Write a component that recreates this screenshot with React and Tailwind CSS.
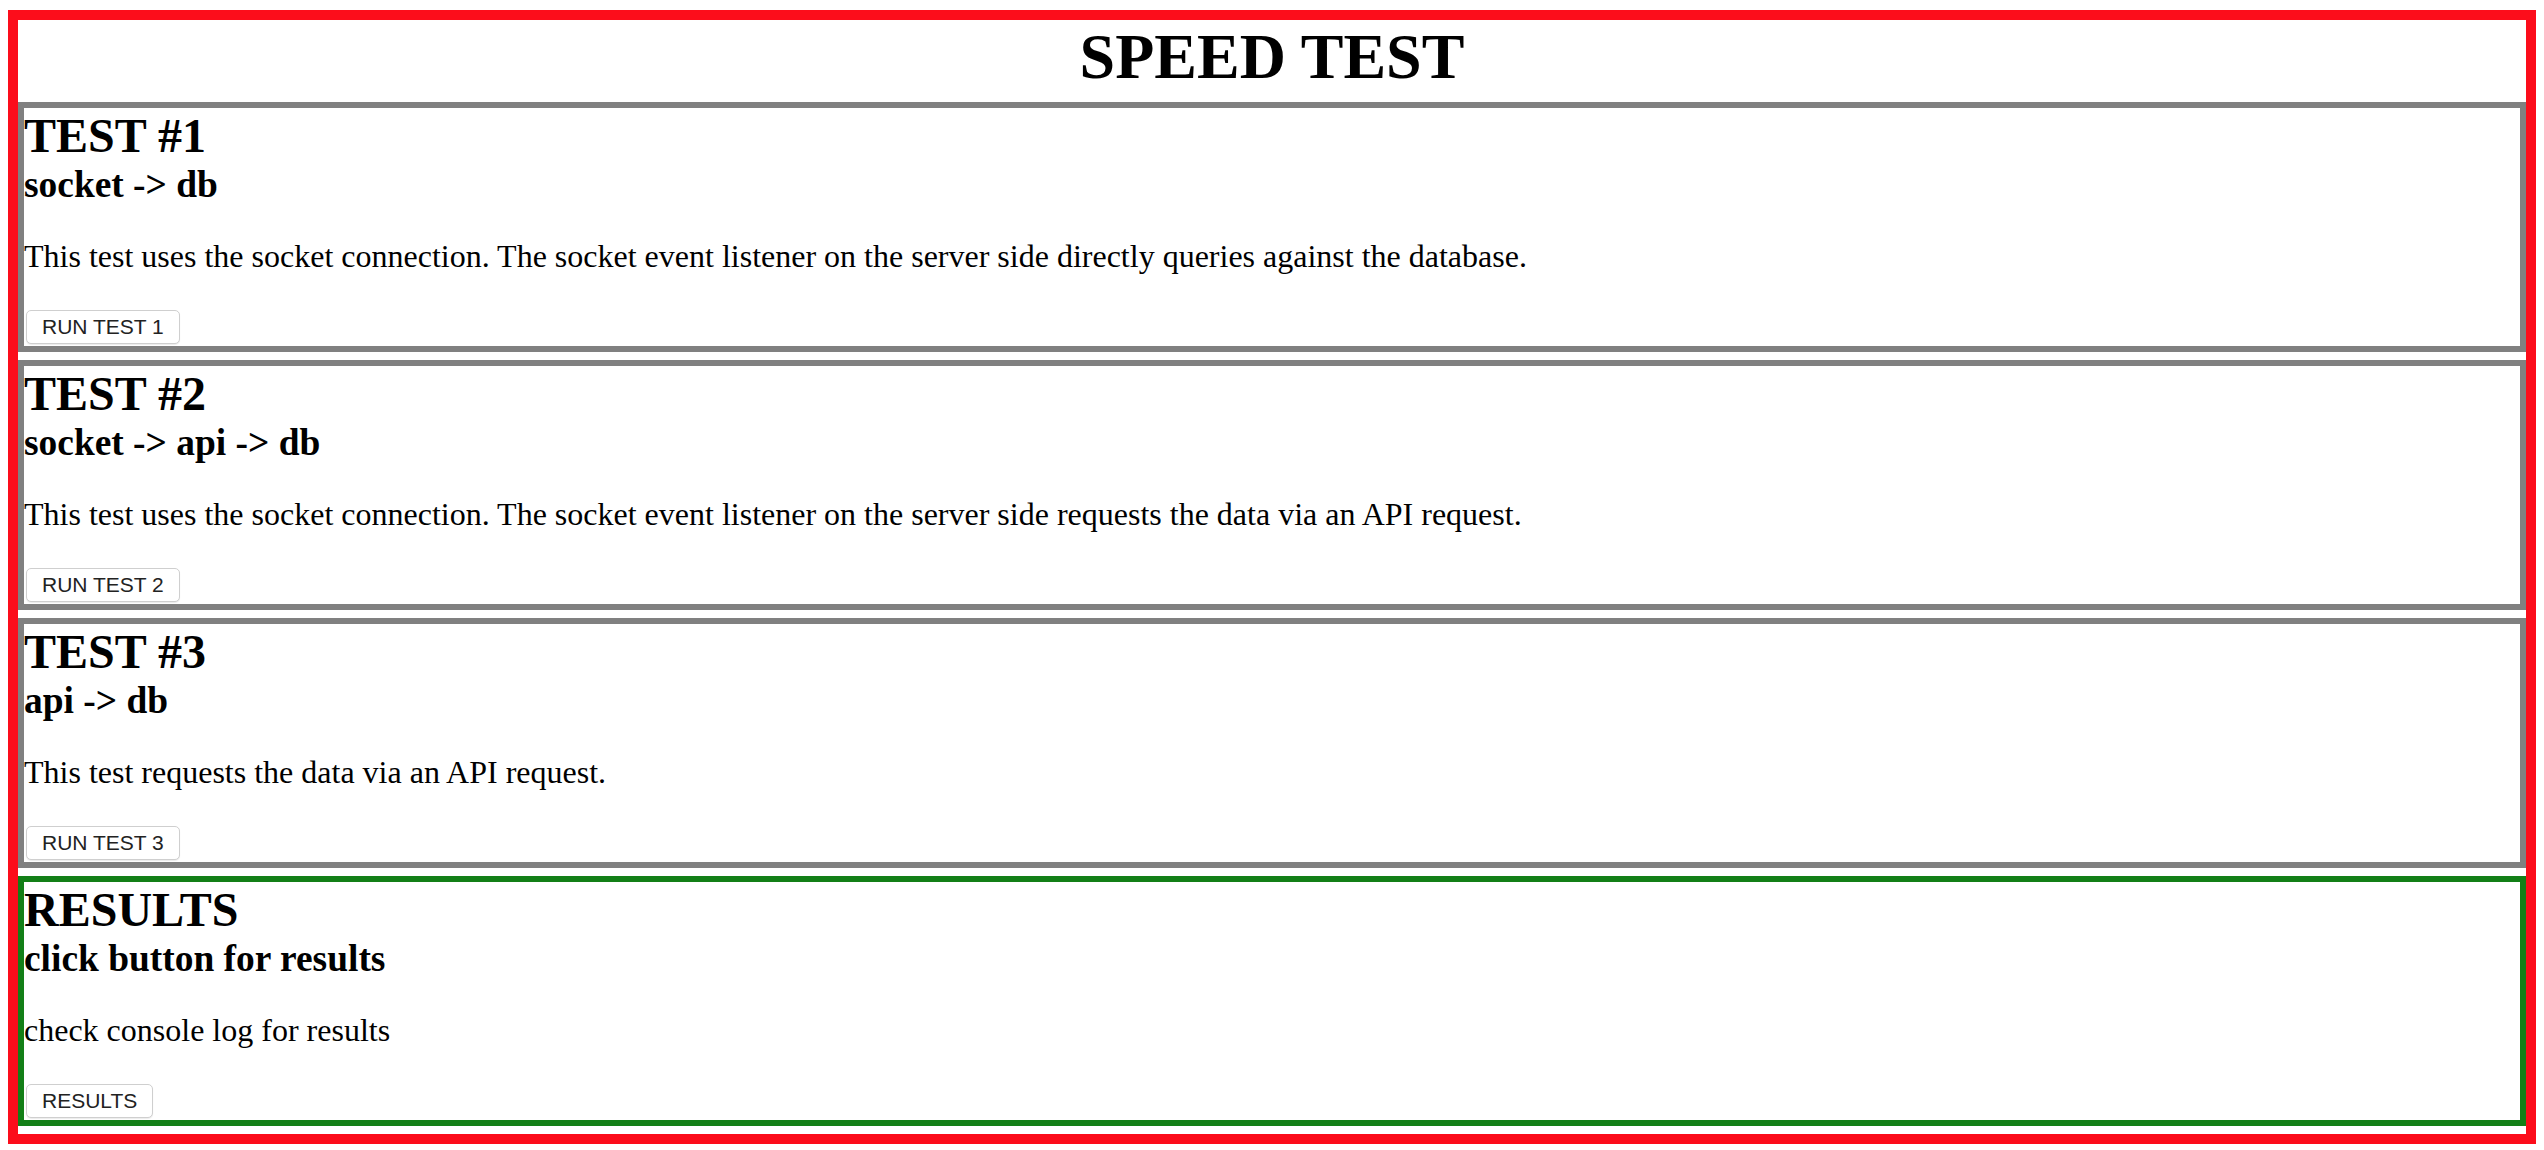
import React from "react";

const serif = { fontFamily: '"Liberation Serif", "Times New Roman", serif' };

function Panel({ title, sub, text, btn, border }) {
  return (
    <div className={`flex flex-col border-[6px] ${border} bg-white text-black`}>
      <h2 className="m-0 text-[48px] font-bold leading-[55px]" style={serif}>{title}</h2>
      <h3 className="m-0 text-[37.44px] font-bold leading-[43px]" style={serif}>{sub}</h3>
      <p className="my-[32px] text-[32px] leading-[37px]" style={serif}>{text}</p>
      <div className="mt-[3px] mb-[2px] flex">
        <button
          className="ml-[2px] flex h-[34px] items-center rounded-[5px] border border-[#cfcfcf] bg-white px-[15px] text-[21px] leading-[24px] text-[#222222] shadow-[0_1px_1px_rgba(0,0,0,0.08)]"
          style={{ fontFamily: '"Liberation Sans", Arial, sans-serif' }}
        >
          {btn}
        </button>
      </div>
    </div>
  );
}

export default function App() {
  return (
    <div className="min-h-[1150px] bg-white pt-[10px] px-[8px]">
      <div className="flex flex-col border-[10px] border-[#fc0d1b] pb-[8px]">
        <h1 className="m-0 text-center text-[64px] font-bold leading-[74px] text-black" style={serif}>
          SPEED TEST
        </h1>
        <div className="mt-[8px] flex flex-col gap-[8px]">
          <Panel
            border="border-[#808080]"
            title="TEST #1"
            sub="socket -> db"
            text="This test uses the socket connection. The socket event listener on the server side directly queries against the database."
            btn="RUN TEST 1"
          />
          <Panel
            border="border-[#808080]"
            title="TEST #2"
            sub="socket -> api -> db"
            text="This test uses the socket connection. The socket event listener on the server side requests the data via an API request."
            btn="RUN TEST 2"
          />
          <Panel
            border="border-[#808080]"
            title="TEST #3"
            sub="api -> db"
            text="This test requests the data via an API request."
            btn="RUN TEST 3"
          />
          <Panel
            border="border-[#137f17]"
            title="RESULTS"
            sub="click button for results"
            text="check console log for results"
            btn="RESULTS"
          />
        </div>
      </div>
    </div>
  );
}
